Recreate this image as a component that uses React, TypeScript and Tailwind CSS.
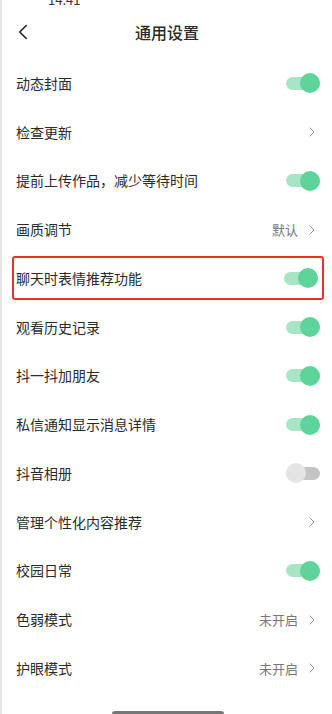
import { ChevronLeft, ChevronRight } from 'lucide-react';

type Row =
  | { label: string; kind: 'toggle'; on: boolean; highlight?: boolean }
  | { label: string; kind: 'link'; value?: string };

const ROWS: Row[] = [
  { label: '动态封面', kind: 'toggle', on: true },
  { label: '检查更新', kind: 'link' },
  { label: '提前上传作品，减少等待时间', kind: 'toggle', on: true },
  { label: '画质调节', kind: 'link', value: '默认' },
  { label: '聊天时表情推荐功能', kind: 'toggle', on: true, highlight: true },
  { label: '观看历史记录', kind: 'toggle', on: true },
  { label: '抖一抖加朋友', kind: 'toggle', on: true },
  { label: '私信通知显示消息详情', kind: 'toggle', on: true },
  { label: '抖音相册', kind: 'toggle', on: false },
  { label: '管理个性化内容推荐', kind: 'link' },
  { label: '校园日常', kind: 'toggle', on: true },
  { label: '色弱模式', kind: 'link', value: '未开启' },
  { label: '护眼模式', kind: 'link', value: '未开启' },
];

function Toggle({ on }: { on: boolean }) {
  if (on) {
    return (
      <div className="relative w-[34px] h-[20px] flex items-center">
        <div className="w-full h-[13px] rounded-full bg-[#a6e5c6]" />
        <div className="absolute right-0 top-0 w-[20px] h-[20px] rounded-full bg-[#5fd49a]" />
      </div>
    );
  }
  return (
    <div className="relative w-[34px] h-[20px] flex items-center">
      <div className="w-full h-[13px] rounded-full bg-[#c4c4c4]" />
      <div className="absolute left-0 top-0 w-[20px] h-[20px] rounded-full bg-[#e4e4e4]" />
    </div>
  );
}

export default function App() {
  return (
    <div
      className="w-[332px] h-[714px] bg-white border-l-2 border-[#e6e6e6] relative overflow-hidden text-[#2a2a2a]"
      style={{ fontFamily: '"Noto Sans CJK SC", "Noto Sans", sans-serif' }}
    >
      <div className="h-[5px] overflow-hidden relative">
        <span className="absolute left-[46px] -top-[10px] text-[13px] text-[#333]">14:41</span>
      </div>

      <div className="h-[54px] flex items-center relative">
        <ChevronLeft className="absolute left-[8px] w-[26px] h-[26px] text-[#222]" strokeWidth={1.5} />
        <h1 className="w-full text-center text-[16px] font-medium">通用设置</h1>
      </div>

      <div className="flex flex-col">
        {ROWS.map((row) => (
          <div
            key={row.label}
            className={`flex items-center justify-between ${
              'highlight' in row && row.highlight
                ? 'ml-[10px] mr-[8px] pl-[2px] pr-[4px] border-2 border-[#e8302b] rounded-[3px] h-[44px] my-[2.4px]'
                : 'h-[48.75px] pl-[14px] pr-[12px]'
            }`}
          >
            <span className="text-[14px]">{row.label}</span>
            {row.kind === 'toggle' ? (
              <Toggle on={row.on} />
            ) : (
              <div className="flex items-center gap-[6px] text-[#777]">
                {row.value && <span className="text-[13px]">{row.value}</span>}
                <ChevronRight className="w-[16px] h-[16px] text-[#888]" strokeWidth={1.4} />
              </div>
            )}
          </div>
        ))}
      </div>

      <div className="absolute bottom-0 left-[110px] w-[112px] h-[3px] bg-[#777] rounded-t-full" />
    </div>
  );
}
